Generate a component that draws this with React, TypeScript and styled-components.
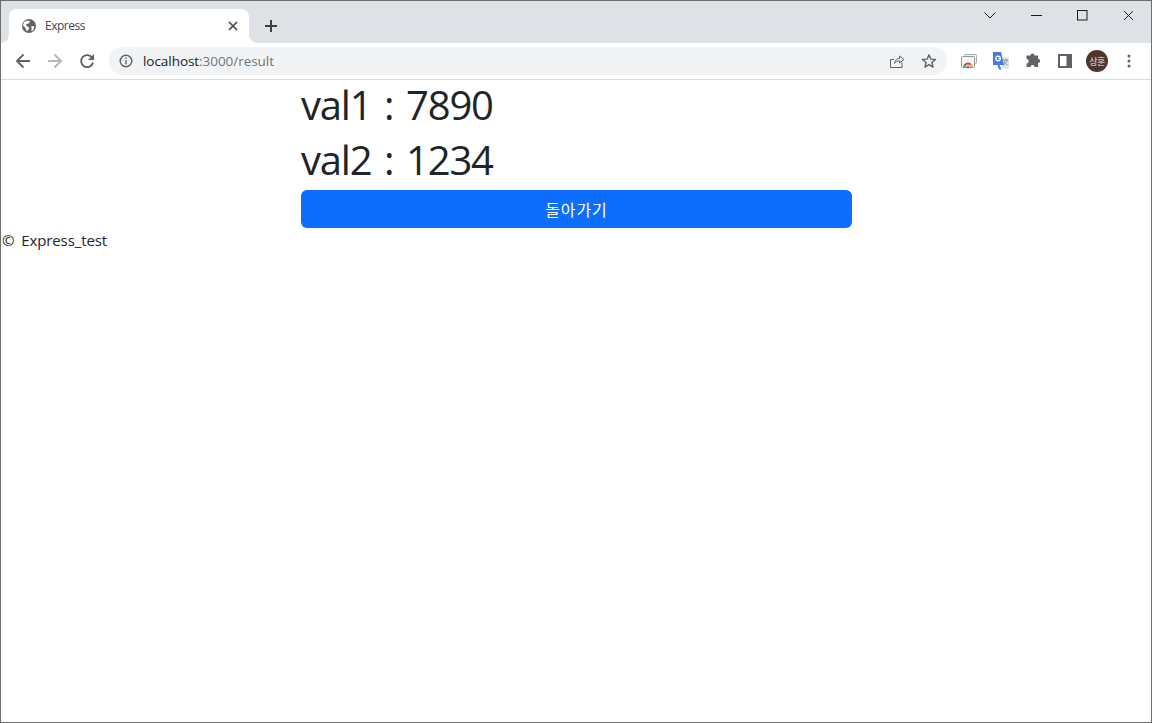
import React, { FC, Fragment } from 'react'
import styled, { createGlobalStyle } from 'styled-components'

const GlobalStyle = createGlobalStyle`
  html, body {
    height: 100%;
    margin: 0;
  }
  body {
    background: #ffffff;
    font-family: "Open Sans", "Noto Sans", "Noto Sans CJK KR", sans-serif;
  }
  #root {
    height: 100%;
  }
`
const Frame = styled.div`
  box-sizing: border-box;
  width: 1152px;
  height: 723px;
  border: 1px solid #6e6e6e;
  display: flex;
  flex-direction: column;
  overflow: hidden;
`
const TabStrip = styled.div`
  height: 42px;
  flex: none;
  background: #dee1e6;
  display: flex;
  align-items: flex-end;
  padding-left: 8px;
`
const Tab = styled.div`
  position: relative;
  width: 240px;
  height: 34px;
  box-sizing: border-box;
  background: #ffffff;
  border-radius: 8px 8px 0 0;
  display: flex;
  align-items: center;
  padding: 0 11px 0 13px;
  &::before,
  &::after {
    content: '';
    position: absolute;
    bottom: 0;
    width: 8px;
    height: 8px;
  }
  &::before {
    left: -8px;
    background: radial-gradient(circle at 0 0, #dee1e6 7.5px, #ffffff 8px);
  }
  &::after {
    right: -8px;
    background: radial-gradient(circle at 100% 0, #dee1e6 7.5px, #ffffff 8px);
  }
`
const TabTitle = styled.span`
  flex: 1;
  margin: 0 0 2px 9px;
  font-size: 12px;
  color: #45484c;
  letter-spacing: -0.5px;
`
const NewTab = styled.div`
  width: 16px;
  height: 16px;
  margin: 0 0 9px 14px;
  color: #3c4043;
  display: flex;
`
const WindowControls = styled.div`
  margin-left: auto;
  align-self: flex-start;
  display: flex;
  align-items: center;
  height: 28px;
  color: #1c1c1c;
`
const ControlCell = styled.div<{ $w: number }>`
  width: ${p => p.$w}px;
  display: flex;
  justify-content: center;
`
const Toolbar = styled.div`
  height: 36px;
  flex: none;
  background: #ffffff;
  border-bottom: 1px solid #dadce0;
  display: flex;
  align-items: center;
  padding-left: 6px;
`
const NavButton = styled.div<{ $muted?: boolean }>`
  width: 32px;
  height: 28px;
  display: flex;
  align-items: center;
  justify-content: center;
  color: ${p => (p.$muted ? '#b4b6b9' : '#5f6368')};
`
const Omnibox = styled.div`
  width: 838px;
  height: 28px;
  margin-left: 6px;
  border-radius: 14px;
  background: #f1f3f4;
  display: flex;
  align-items: center;
  padding: 0 2px 0 10px;
  box-sizing: border-box;
  color: #5f6368;
`
const Url = styled.span`
  flex: 1;
  margin-left: 10px;
  font-size: 13.5px;
  color: #70757a;
  letter-spacing: -0.05px;
`
const Host = styled.span`
  color: #202124;
`
const OmniAction = styled.div`
  width: 32px;
  display: flex;
  justify-content: center;
  color: #5f6368;
`
const Extensions = styled.div`
  display: flex;
  align-items: center;
  margin-left: 6px;
`
const ExtButton = styled.div`
  width: 32px;
  display: flex;
  justify-content: center;
  align-items: center;
  color: #5f6368;
`
const Avatar = styled.div`
  width: 22px;
  height: 22px;
  border-radius: 50%;
  background: #50352e;
  color: #f2e9e6;
  font-size: 9px;
  letter-spacing: -0.5px;
  display: flex;
  align-items: center;
  justify-content: center;
  font-family: "Noto Sans CJK KR", sans-serif;
`
const Page = styled.main`
  flex: 1;
  background: #ffffff;
  color: #212529;
`
const Container = styled.div`
  width: 551px;
  margin-left: 300px;
`
const Value = styled.h1`
  margin: 0;
  height: 55px;
  font-size: 40px;
  font-weight: 400;
  line-height: 49px;
  color: #212529;
  letter-spacing: -1.2px;
  word-spacing: 3.5px;
`
const BackButton = styled.button`
  display: block;
  width: 100%;
  height: 38px;
  border: 0;
  border-radius: 6px;
  background: #0d6efd;
  color: #ffffff;
  font-family: "Noto Sans CJK KR", sans-serif;
  font-size: 16px;
  letter-spacing: 0.9px;
  padding: 0 0 1px;
  cursor: pointer;
`
const Footer = styled.footer`
  margin-left: 1px;
  font-size: 15px;
  line-height: 24px;
  color: #212529;
  letter-spacing: -0.1px;
  word-spacing: 3px;
`

const Globe: FC = () => (
  <svg width="14" height="14" viewBox="0 0 14 14">
    <circle cx="7" cy="7" r="7" fill="#5f6368" />
    <path d="M2 3l3-1.5 3 .5-1 2.500-3 .5 1 2.500 2 .5-.5 3-2 1-1-3-2.500-2.500zM9.500 7l3 .5-1.500 4-1.500.5z" fill="#ffffff" />
  </svg>
)

const Cross: FC<{ size: number; width: number; color: string }> = ({ size, width, color }) => (
  <svg width={size} height={size} viewBox="0 0 10 10">
    <path d="M1 1l8 8M9 1l-8 8" stroke={color} strokeWidth={width} fill="none" />
  </svg>
)

const App: FC = () => {
  return (
    <Fragment>
      <GlobalStyle />
      <Frame>
        <TabStrip>
          <Tab>
            <Globe />
            <TabTitle>Express</TabTitle>
            <Cross size={10} width={1.7} color="#45484c" />
          </Tab>
          <NewTab>
            <svg width="16" height="16" viewBox="0 0 16 16">
              <path d="M8 2v12M2 8h12" stroke="currentColor" strokeWidth="2" fill="none" />
            </svg>
          </NewTab>
          <WindowControls>
            <ControlCell $w={46}>
              <svg width="12" height="7" viewBox="0 0 12 7">
                <path d="M.5.5L6 6 11.500.5" stroke="currentColor" fill="none" />
              </svg>
            </ControlCell>
            <ControlCell $w={46}>
              <svg width="11" height="1" viewBox="0 0 11 1">
                <path d="M0 .5h11" stroke="currentColor" />
              </svg>
            </ControlCell>
            <ControlCell $w={46}>
              <svg width="11" height="11" viewBox="0 0 11 11">
                <rect x=".5" y=".5" width="9.500" height="9.500" stroke="currentColor" fill="none" />
              </svg>
            </ControlCell>
            <ControlCell $w={46}>
              <Cross size={11} width={0.9} color="#1c1c1c" />
            </ControlCell>
          </WindowControls>
        </TabStrip>
        <Toolbar>
          <NavButton>
            <svg width="16" height="16" viewBox="0 0 16 16">
              <path d="M15 8H2.500M8.500 1.500L2 8l6.500 6.500" stroke="currentColor" strokeWidth="1.900" fill="none" />
            </svg>
          </NavButton>
          <NavButton $muted>
            <svg width="16" height="16" viewBox="0 0 16 16">
              <path d="M1 8h12.500M7.500 1.500L14 8l-6.500 6.500" stroke="currentColor" strokeWidth="1.900" fill="none" />
            </svg>
          </NavButton>
          <NavButton>
            <svg width="16" height="16" viewBox="0 0 16 16">
              <path d="M13.300 5A6 6 0 1 0 14 9.500" stroke="currentColor" strokeWidth="1.900" fill="none" />
              <path d="M15 1v6H9z" fill="currentColor" />
            </svg>
          </NavButton>
          <Omnibox>
            <svg width="14" height="14" viewBox="0 0 14 14">
              <circle cx="7" cy="7" r="5.800" stroke="currentColor" strokeWidth="1.400" fill="none" />
              <path d="M7 6v4.200M7 3.600v1.400" stroke="currentColor" strokeWidth="1.400" />
            </svg>
            <Url>
              <Host>localhost</Host>:3000/result
            </Url>
            <OmniAction>
              <svg width="16" height="16" viewBox="0 0 16 16">
                <path d="M13 9.500V14.500H1.500V6.500H5M5.500 10.500C6 7 8 5.500 10.500 5.500V3L15 6.500 10.500 10V7.800C8.500 7.800 7 8.500 5.500 10.500z" stroke="currentColor" strokeWidth="1" fill="none" />
              </svg>
            </OmniAction>
            <OmniAction>
              <svg width="16" height="16" viewBox="0 0 16 16">
                <path d="M8 1.800l1.800 4.300 4.700.4-3.600 3 1.100 4.600L8 11.700l-4 2.400 1.100-4.600-3.600-3 4.700-.4z" stroke="currentColor" strokeWidth="1.400" fill="none" strokeLinejoin="round" />
              </svg>
            </OmniAction>
          </Omnibox>
          <Extensions>
            <ExtButton>
              <svg width="16" height="16" viewBox="0 0 16 16">
                <rect x="3.500" y="1.500" width="12" height="9" rx="1" stroke="#a8abaf" fill="#f1f3f4" />
                <rect x=".5" y="3.500" width="13" height="11" rx="1" stroke="#93979b" fill="#f7f7f7" />
                <path d="M2.500 14a4.500 4.500 0 0 1 9 0H9.500a2.500 2.500 0 0 0-5 0z" fill="#ea4335" />
                <path d="M2.500 14a4.500 4.500 0 0 1 1.300-3.200L5.200 12.200A2.500 2.500 0 0 0 4.500 14z" fill="#34a853" />
                <path d="M11.500 14a4.500 4.500 0 0 0-1.300-3.200L8.800 12.200A2.500 2.500 0 0 1 9.500 14z" fill="#fbbc05" />
                <circle cx="7" cy="14" r="1.500" fill="#4285f4" />
              </svg>
            </ExtButton>
            <ExtButton>
              <svg width="16" height="18" viewBox="0 0 16 18">
                <path d="M8 5.500h8v11H9z" fill="#dfe1e3" />
                <path d="M10 8h5M12.500 7v1M14 8c-.5 2.500-2 4-3.500 5M11 9.500c.5 1.500 2 3 3.500 3.500" stroke="#7d8287" strokeWidth=".8" fill="none" />
                <path d="M0 0h8l3 13H6.500l2 4.500H6L4.500 13H0z" fill="#3f7ee8" />
                <circle cx="5" cy="6.500" r="2.300" stroke="#ffffff" strokeWidth="1.300" fill="none" />
                <path d="M5 6.500h2.500" stroke="#ffffff" strokeWidth="1" />
              </svg>
            </ExtButton>
            <ExtButton>
              <svg width="16" height="16" viewBox="0 0 16 16">
                <path d="M5.500 2.500a2 2 0 0 1 4 0H13v3.300a2.100 2.100 0 0 1 0 4.200V14H9.500a2 2 0 0 0-4 0H1.500v-3.500a2.200 2.200 0 0 0 0-4.500V2.500z" fill="currentColor" />
              </svg>
            </ExtButton>
            <ExtButton>
              <svg width="14" height="14" viewBox="0 0 14 14">
                <path d="M0 0h14v14H0zM2 2v10h6.500V2z" fill="currentColor" fillRule="evenodd" />
              </svg>
            </ExtButton>
            <ExtButton>
              <Avatar>상훈</Avatar>
            </ExtButton>
            <ExtButton>
              <svg width="4" height="14" viewBox="0 0 4 14">
                <circle cx="2" cy="2" r="1.500" fill="currentColor" />
                <circle cx="2" cy="7" r="1.500" fill="currentColor" />
                <circle cx="2" cy="12" r="1.500" fill="currentColor" />
              </svg>
            </ExtButton>
          </Extensions>
        </Toolbar>
        <Page>
          <Container>
            <Value>val1 : 7890</Value>
            <Value>val2 : 1234</Value>
            <BackButton>돌아가기</BackButton>
          </Container>
          <Footer>© Express_test</Footer>
        </Page>
      </Frame>
    </Fragment>
  )
}

export default App
